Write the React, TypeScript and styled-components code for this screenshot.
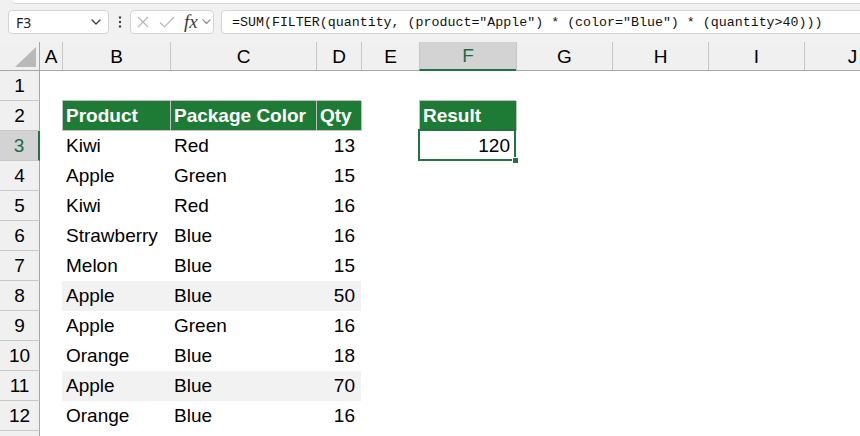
import React from 'react';
import styled, { createGlobalStyle, css } from 'styled-components';

const GlobalStyle = createGlobalStyle`
  html, body { margin: 0; padding: 0; background: #ffffff; }
  body { width: 860px; height: 436px; overflow: hidden; }
  #root { width: 860px; height: 436px; }
`;

const SEL_GREEN = '#217346';
const TABLE_GREEN = '#1e7b36';
const SHEET_FONT = '"Liberation Sans", Arial, sans-serif';

const Window = styled.div`
  width: 860px;
  height: 436px;
  overflow: hidden;
  background: #f1f1f1;
  display: flex;
  flex-direction: column;
  font-family: ${SHEET_FONT};
`;

const RibbonEdge = styled.div`
  flex: none;
  height: 3px;
  margin-left: 12px;
  background: #ffffff;
  border-bottom: 1px solid #d4d4d4;
  border-bottom-left-radius: 6px;
`;

const FormulaBar = styled.div`
  flex: none;
  display: flex;
  align-items: center;
  height: 24px;
  padding: 6px 0 8px 8px;
`;

const Box = styled.div`
  box-sizing: border-box;
  height: 24px;
  background: #ffffff;
  border: 1px solid #d3d3d3;
  border-radius: 4px;
  display: flex;
  align-items: center;
`;

const NameBox = styled(Box)`
  width: 101px;
  justify-content: space-between;
  padding: 0 7px 0 7px;
  font: 14px "Noto Sans", ${SHEET_FONT};
  color: #1f1f1f;
`;

const Dots = styled.div`
  width: 21px;
  display: flex;
  justify-content: center;
  align-items: center;
`;

const FxGroup = styled(Box)`
  width: 84px;
  padding-left: 6px;
`;

const FxIcon = styled.span<{ $gap: number }>`
  display: flex;
  align-items: center;
  margin-left: ${(p) => p.$gap}px;
`;

const FxText = styled.span`
  font: italic 19px "Liberation Serif", "Times New Roman", serif;
  color: #3a3a3a;
  line-height: 22px;
  margin-left: 9px;
`;

const FormulaInput = styled(Box)`
  flex: 1;
  margin-left: 7px;
  margin-right: -20px;
  padding-left: 10px;
  font: 13.3px "Liberation Mono", "Courier New", monospace;
  color: #111111;
  white-space: nowrap;
`;

const Sheet = styled.div`
  flex: none;
  display: grid;
  grid-template-columns: 40px 22px 108px 146px 45px 58px 97px 96px 96px 96px 96px;
  grid-template-rows: 29px;
  grid-auto-rows: 30px;
  background: #ffffff;
  font: 19px ${SHEET_FONT};
  color: #000000;
`;

const Corner = styled.div`
  box-sizing: border-box;
  background: #f0f0f0;
  border-right: 1px solid #a6a6a6;
  border-bottom: 1px solid #a6a6a6;
  display: flex;
  align-items: flex-end;
  justify-content: flex-end;
  padding: 0 3px 3px 0;
`;

const ColHeader = styled.div<{ $selected?: boolean }>`
  box-sizing: border-box;
  background: ${(p) => (p.$selected ? '#d3d3d3' : '#f0f0f0')};
  border-bottom: ${(p) => (p.$selected ? `2px solid ${SEL_GREEN}` : '1px solid #a6a6a6')};
  color: ${(p) => (p.$selected ? '#1d6b41' : '#000000')};
  text-align: center;
  line-height: ${(p) => (p.$selected ? '28px' : '29px')};
  & + & {
    border-left: 1px solid #c6c6c6;
  }
`;

const RowHeader = styled.div<{ $selected?: boolean }>`
  box-sizing: border-box;
  background: ${(p) => (p.$selected ? '#d3d3d3' : '#f0f0f0')};
  border-bottom: 1px solid #c9c9c9;
  border-right: ${(p) => (p.$selected ? `2px solid ${SEL_GREEN}` : '1px solid #a6a6a6')};
  color: ${(p) => (p.$selected ? '#1d6b41' : '#000000')};
  text-align: center;
  line-height: 30px;
`;

type Kind = 'plain' | 'band' | 'head' | 'selected';

const kindStyles: Record<Kind, ReturnType<typeof css>> = {
  plain: css``,
  band: css`
    background: #f2f2f2;
  `,
  head: css`
    background: ${TABLE_GREEN};
    color: #ffffff;
    font-weight: bold;
    box-shadow: inset 1px 0 #c0c0c0, inset 0 -1px #c0c0c0, 0 -1px #c0c0c0, 1px 0 #c0c0c0;
  `,
  selected: css`
    position: relative;
    z-index: 1;
    &::after {
      content: '';
      position: absolute;
      top: -2px;
      left: -1px;
      right: 0;
      bottom: 0;
      border: 2px solid ${SEL_GREEN};
    }
    &::before {
      content: '';
      position: absolute;
      right: -3px;
      bottom: -3px;
      width: 5px;
      height: 5px;
      background: ${SEL_GREEN};
      border: 1px solid #ffffff;
      z-index: 2;
    }
  `,
};

const Cell = styled.div<{ $kind: Kind; $align: 'left' | 'right' }>`
  box-sizing: border-box;
  padding: 0 6px 0 4px;
  line-height: 30px;
  white-space: nowrap;
  text-align: ${(p) => p.$align};
  ${(p) => kindStyles[p.$kind]}
`;

const COLS = ['A', 'B', 'C', 'D', 'E', 'F', 'G', 'H', 'I', 'J'];

const DATA: [string, string, number][] = [
  ['Kiwi', 'Red', 13],
  ['Apple', 'Green', 15],
  ['Kiwi', 'Red', 16],
  ['Strawberry', 'Blue', 16],
  ['Melon', 'Blue', 15],
  ['Apple', 'Blue', 50],
  ['Apple', 'Green', 16],
  ['Orange', 'Blue', 18],
  ['Apple', 'Blue', 70],
  ['Orange', 'Blue', 16],
];

interface CellSpec {
  text?: string | number;
  kind: Kind;
  align: 'left' | 'right';
}

const specFor = (row: number, col: string): CellSpec => {
  const empty: CellSpec = { kind: 'plain', align: 'left' };
  if (row === 2) {
    if (col === 'B') return { text: 'Product', kind: 'head', align: 'left' };
    if (col === 'C') return { text: 'Package Color', kind: 'head', align: 'left' };
    if (col === 'D') return { text: 'Qty', kind: 'head', align: 'left' };
    if (col === 'F') return { text: 'Result', kind: 'head', align: 'left' };
    return empty;
  }
  if (row === 3 && col === 'F') return { text: 120, kind: 'selected', align: 'right' };
  const d = DATA[row - 3];
  if (d && ['B', 'C', 'D'].includes(col)) {
    const band = d[0] === 'Apple' && d[1] === 'Blue' && d[2] > 40;
    const kind: Kind = band ? 'band' : 'plain';
    if (col === 'B') return { text: d[0], kind, align: 'left' };
    if (col === 'C') return { text: d[1], kind, align: 'left' };
    return { text: d[2], kind, align: 'right' };
  }
  return empty;
};

const Chevron = ({ w = 10, color = '#3c3c3c' }: { w?: number; color?: string }) => (
  <svg width={w} height={w * 0.6} viewBox="0 0 10 6">
    <path d="M1 1 L5 5 L9 1" fill="none" stroke={color} strokeWidth="1.3" strokeLinecap="round" strokeLinejoin="round" />
  </svg>
);

const VISIBLE_ROWS = 12;

export default function App() {
  const rows = Array.from({ length: VISIBLE_ROWS + 1 }, (_, i) => i + 1);
  return (
    <Window>
      <GlobalStyle />
      <RibbonEdge />
      <FormulaBar>
        <NameBox>
          <span>F3</span>
          <Chevron />
        </NameBox>
        <Dots>
          <svg width="4" height="12" viewBox="0 0 4 12">
            <circle cx="2" cy="1.5" r="1.2" fill="#444" />
            <circle cx="2" cy="6" r="1.2" fill="#444" />
            <circle cx="2" cy="10.5" r="1.2" fill="#444" />
          </svg>
        </Dots>
        <FxGroup>
          <FxIcon $gap={0}>
            <svg width="12" height="12" viewBox="0 0 12 12">
              <path d="M1 1 L11 11 M11 1 L1 11" stroke="#b8b8b8" strokeWidth="1.2" />
            </svg>
          </FxIcon>
          <FxIcon $gap={10}>
            <svg width="16" height="12" viewBox="0 0 16 12">
              <path d="M1 6.5 L5.5 11 L15 1" fill="none" stroke="#b8b8b8" strokeWidth="1.2" />
            </svg>
          </FxIcon>
          <FxText>fx</FxText>
          <FxIcon $gap={4}>
            <Chevron w={9} color="#8a8a8a" />
          </FxIcon>
        </FxGroup>
        <FormulaInput>
          =SUM(FILTER(quantity, (product="Apple") * (color="Blue") * (quantity&gt;40)))
        </FormulaInput>
      </FormulaBar>
      <Sheet>
        <Corner>
          <svg width="21" height="20" viewBox="0 0 21 20">
            <polygon points="21,0 21,20 0,20" fill="#b9b9b9" />
          </svg>
        </Corner>
        {COLS.map((c) => (
          <ColHeader key={c} $selected={c === 'F'}>
            {c}
          </ColHeader>
        ))}
        {rows.map((r) => (
          <React.Fragment key={r}>
            <RowHeader $selected={r === 3}>{r <= VISIBLE_ROWS ? r : null}</RowHeader>
            {COLS.map((c) => {
              const s = specFor(r, c);
              return (
                <Cell key={c} $kind={s.kind} $align={s.align}>
                  {s.text}
                </Cell>
              );
            })}
          </React.Fragment>
        ))}
      </Sheet>
    </Window>
  );
}
